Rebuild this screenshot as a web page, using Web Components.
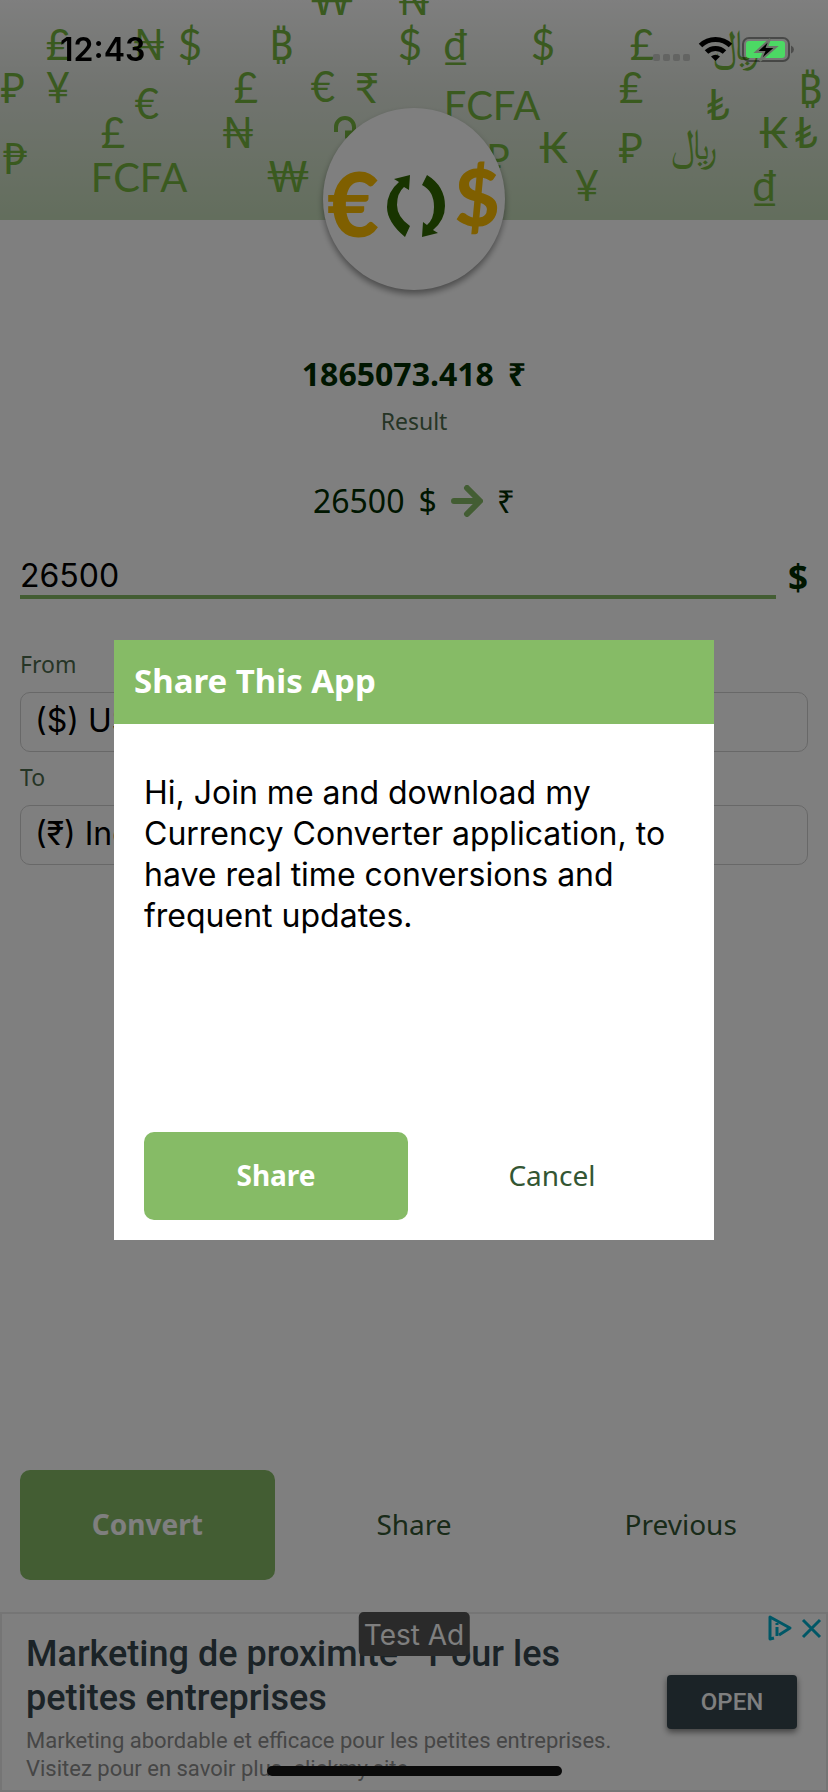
<!DOCTYPE html>
<html lang="en">
<head>
<meta charset="utf-8">
<meta name="viewport" content="width=device-width, initial-scale=1">
<title>Currency Converter</title>
<style>
html, body { margin: 0; }
body { background: #fff; font-family: "Noto Sans", sans-serif; }
</style>
</head>
<body>
<converter-app></converter-app>
<script>
const define = (name, html) => {
  const template = document.createElement('template');
  template.innerHTML = html;
  customElements.define(name, class extends HTMLElement {
    constructor() {
      super();
      this.attachShadow({ mode: 'open' }).append(template.content.cloneNode(true));
    }
    connectedCallback() {
      for (const el of this.shadowRoot.querySelectorAll('[data-value]')) {
        el.value = this.getAttribute(el.dataset.value) || '';
      }
      const select = this.shadowRoot.querySelector('select');
      if (select && !select.options.length) {
        select.add(new Option(this.getAttribute('value')));
      }
    }
  });
};

/* Currency symbols scattered over the banner: [text, centre x, baseline] */
const symbols = [
  ['₩', 332, 15], ['₦', 414, 15],
  ['₤', 58, 60], ['₦', 149, 60], ['$', 190, 60], ['₿', 281, 60], ['$', 410, 60],
  ['₫', 456, 60], ['$', 543, 60], ['£', 642, 60], ['﷼', 736, 60],
  ['₽', 13, 103], ['¥', 58, 103], ['€', 147, 119], ['£', 246, 103], ['€', 323, 102],
  ['₹', 367, 103], ['₤', 631, 103], ['₿', 810, 104], ['FCFA', 492, 120], ['₺', 718, 120],
  ['£', 113, 148], ['₦', 238, 148], ['₭', 774, 148], ['₺', 806, 148], ['﷼', 694, 159],
  ['₱', 15, 174], ['₽', 498, 174], ['₭', 554, 163], ['₽', 631, 163],
  ['FCFA', 139, 192], ['₩', 288, 192], ['¥', 587, 201], ['₫', 765, 201]
];

define('status-bar', `
<style>
:host { display: flex; align-items: center; justify-content: space-between; height: 100px; padding: 0 34px 0 60px; box-sizing: border-box; color: #000; }
time { font: 600 32px/40px Inter, sans-serif; }
svg { display: block; }
</style>
<time>12:43</time>
<svg width="144" height="30" viewBox="0 0 144 30" aria-label="Wi-Fi, battery charging">
  <g fill="#636462"><rect x="3" y="19" width="7" height="7" rx="2"/><rect x="13" y="19" width="7" height="7" rx="2"/><rect x="23" y="19" width="7" height="7" rx="2"/><rect x="33" y="19" width="7" height="7" rx="2"/></g>
  <g fill="none" stroke="#000" stroke-width="5"><path d="M50.500 10.500a21.500 21.500 0 0 1 30 0"/><path d="M56.500 17a13 13 0 0 1 18 0"/></g>
  <path d="M65.500 26l-4.500-4.500a7 7 0 0 1 9 0z"/>
  <rect x="93" y="3" width="46" height="23" rx="6" fill="none" stroke="#000" stroke-opacity=".4" stroke-width="2"/>
  <path d="M141 10.500q3 1.500 3 4t-3 4z" fill="#4c4c4b"/>
  <rect x="96" y="6" width="39" height="17" rx="3" fill="#4cd964"/>
  <path d="M120 4l-14 13h8l-4 9 16-14h-9z" fill="#000" stroke="#6d746b" stroke-width="2"/>
</svg>`);

define('symbol-banner', `
<style>
:host { display: block; height: 220px; background: linear-gradient(#fefefe, #e3e8e0 40%, #c6dcba); overflow: hidden; }
svg { display: block; width: 100%; height: 100%; }
text { font-family: Lato, "Noto Sans", sans-serif; font-size: 42px; fill: #75b43e; text-anchor: middle; }
.word { font-size: 40px; }
</style>
<svg viewBox="0 0 828 220" preserveAspectRatio="xMidYMin slice" aria-hidden="true">
  ${symbols.map(([t, x, y]) => `<text x="${x}" y="${y}"${t.length > 1 ? ' class="word"' : ''}>${t}</text>`).join('')}
  <path d="M336 132v-5a9 9 0 0 1 18 0v5M345 132.500h11M345 136.500h6" fill="none" stroke="#75b43e" stroke-width="4"/>
</svg>`);

define('app-logo', `
<style>
:host { display: block; width: 182px; height: 182px; border-radius: 50%; background: #fff; box-shadow: 0 4px 6px rgba(0,0,0,.4); }
svg { display: block; }
text { font: 900 90px Lato, sans-serif; fill: #ffbf00; }
.dollar { font-size: 78px; }
</style>
<svg width="182" height="182" viewBox="0 0 182 182" role="img" aria-label="Euro and dollar exchange">
  <text x="30" y="129" text-anchor="middle">€</text>
  <text class="dollar" x="154" y="118" text-anchor="middle">$</text>
  <g fill="#306800">
    <path d="M87 67L71 71l5 3Q64 84 64 99T82 129L87 118Q74 109 74 97T81 79L86 82z"/>
    <path d="M104 67Q122 78 122 98Q122 112 110 122L115 125 99 129 100 114 104 117Q111 111 111 99Q111 83 99 77z"/>
  </g>
</svg>`);

define('conversion-result', `
<style>
:host { display: flex; flex-direction: column; align-items: center; color: #002c00; font-size: 32px; line-height: 44px; }
.row { display: flex; align-items: center; gap: 14px; }
.total { font-weight: 700; }
.caption { margin-top: 9px; font-size: 23px; line-height: 32px; color: #4d6b4d; }
.route { margin-top: 42px; }
svg { display: block; }
</style>
<div class="row total"><slot name="total"></slot><slot name="target"></slot></div>
<div class="caption">Result</div>
<div class="row route"><slot name="amount"></slot><slot name="source"></slot>
<svg width="32" height="32" viewBox="0 0 32 32" fill="none" stroke="#86bb66" stroke-width="6" stroke-linecap="round" stroke-linejoin="round" aria-label="to"><path d="M3 16h25M16 3l13 13-13 13"/></svg>
<slot name="unit"></slot></div>`);

define('amount-field', `
<style>
:host { display: flex; align-items: center; gap: 12px; }
input { flex: 1; min-width: 0; height: 44px; box-sizing: border-box; margin: 0; padding: 0; border: 0; border-bottom: 4px solid #86bb66; border-radius: 0; background: none; color: #000; font: 32px Inter, sans-serif; outline: none; }
label { font-size: 35px; line-height: 44px; font-weight: 700; color: #002c00; }
</style>
<input id="amount" inputmode="decimal" data-value="value"><label for="amount" aria-label="Amount in dollars"><slot></slot></label>`);

define('currency-select', `
<style>
:host { display: flex; flex-direction: column; gap: 12px; }
label { font-size: 23px; line-height: 32px; color: #4d6b4d; }
select { appearance: none; width: 100%; height: 60px; box-sizing: border-box; margin: 0; padding: 0 14px 4px; border: 1px solid #d0d0d0; border-radius: 10px; background: none; color: #000; font: 32px Inter, sans-serif; }
</style>
<label for="currency"><slot></slot></label><select id="currency"></select>`);

define('action-button', `
<style>
:host { display: flex; flex: 1 1 0; min-width: 0; }
button { flex: 1; min-width: 0; margin: 0; padding: 0 0 2px; border: 0; border-radius: 10px; background: none; color: #335633; font: 400 28px/40px "Noto Sans", sans-serif; cursor: pointer; }
:host([primary]) button { background: #86bb66; color: #fff; font-weight: 700; }
</style>
<button type="button"><slot></slot></button>`);

define('ad-banner', `
<style>
:host { position: relative; display: flex; align-items: center; gap: 24px; min-height: 180px; box-sizing: border-box; padding: 0 29px 0 24px; border: 2px solid #eaeaea; background: #fff; font-family: Roboto, sans-serif; }
.copy { flex: 1; min-width: 0; padding: 18px 0 7px; }
h2 { margin: 0; font-size: 36px; line-height: 44px; font-weight: 500; color: #37474f; }
p { margin: 7px 0 0; font-size: 22px; line-height: 28px; color: #8c8c8c; white-space: nowrap; }
.open { display: block; width: 130px; padding: 9px 0; border-radius: 4px; background: #37474f; color: #fff; box-shadow: 0 3px 6px rgba(0,0,0,.5); font-size: 24px; line-height: 36px; font-weight: 500; text-align: center; text-decoration: none; }
.tag { position: absolute; top: -2px; left: 50%; transform: translateX(-50%); padding: 3px 5px 1px; border-radius: 5px; background: #555; color: #fff; font: 28px/40px Inter, sans-serif; white-space: nowrap; }
.choices { position: absolute; top: 1px; right: 1px; display: flex; gap: 6px; }
.choices button { display: block; padding: 0; border: 0; background: none; }
svg { display: block; }
</style>
<div class="copy"><h2>Marketing de proximité - Pour les petites entreprises</h2>
<p>Marketing abordable et efficace pour les petites entreprises.<br>Visitez pour en savoir plus. clickmy.site</p></div>
<a class="open" href="#open">OPEN</a>
<div class="choices">
<button aria-label="Ad choices"><svg width="26" height="26" viewBox="0 0 26 26" fill="none" stroke="#00aecd" stroke-width="3" stroke-linejoin="round"><path d="M7 23l-4 1V2l20 11-11 7"/><path d="M10 12v9M10 8v2"/></svg></button>
<button aria-label="Close ad"><svg width="26" height="26" viewBox="0 0 26 26" fill="none" stroke="#00aecd" stroke-width="3"><path d="M4 5l17 17M21 5L4 22"/></svg></button>
</div>
<span class="tag">Test Ad</span>`);

define('share-dialog', `
<style>
:host { display: flex; flex-direction: column; width: 600px; max-width: 100%; min-height: 600px; box-sizing: border-box; background: #fff; }
h1 { margin: 0; padding: 19px 20px 21px; background: #86bb66; color: #fff; font-size: 33px; line-height: 44px; font-weight: 700; }
p { margin: 48px 30px 0; color: #000; font: 32px/41px Inter, sans-serif; }
.actions { display: flex; gap: 12px; height: 88px; margin-top: auto; padding: 0 30px 20px; }
</style>
<h1><slot name="title"></slot></h1>
<p><slot></slot></p>
<div class="actions"><action-button primary>Share</action-button><action-button>Cancel</action-button></div>`);

define('modal-layer', `
<style>
:host { position: fixed; inset: 0; z-index: 1; display: flex; align-items: center; justify-content: center; padding-top: 88px; background: rgba(0,0,0,.5); }
</style><slot></slot>`);

define('converter-app', `
<style>
:host { display: flex; flex-direction: column; min-height: 100vh; }
app-logo { align-self: center; margin-top: -112px; position: relative; }
main { display: flex; flex-direction: column; flex: 1; padding: 62px 20px 32px; }
amount-field { margin-top: 32px; }
.currencies { display: flex; flex-direction: column; gap: 9px; margin-top: 49px; }
nav { display: flex; gap: 12px; height: 110px; margin-top: auto; }
status-bar { position: fixed; top: 0; left: 0; right: 0; z-index: 2; }
.home { position: fixed; z-index: 2; bottom: 16px; left: 50%; width: 295px; height: 10px; margin-left: -147px; border-radius: 5px; background: #0a0a0a; }
</style>
<symbol-banner></symbol-banner>
<app-logo></app-logo>
<main>
  <conversion-result>
    <span slot="total">1865073.418</span><span slot="target">₹</span>
    <span slot="amount">26500</span><span slot="source">$</span><span slot="unit">₹</span>
  </conversion-result>
  <amount-field value="26500">$</amount-field>
  <div class="currencies">
    <currency-select value="($) US Dollar">From</currency-select>
    <currency-select value="(₹) Indian Rupee">To</currency-select>
  </div>
  <nav><action-button primary>Convert</action-button><action-button>Share</action-button><action-button>Previous</action-button></nav>
</main>
<ad-banner></ad-banner>
<modal-layer>
  <share-dialog role="dialog" aria-modal="true" aria-label="Share This App"><span slot="title">Share This App</span>Hi, Join me and download my Currency Converter application, to have real time conversions and frequent updates.</share-dialog>
</modal-layer>
<status-bar></status-bar>
<div class="home"></div>`);
</script>
</body>
</html>
